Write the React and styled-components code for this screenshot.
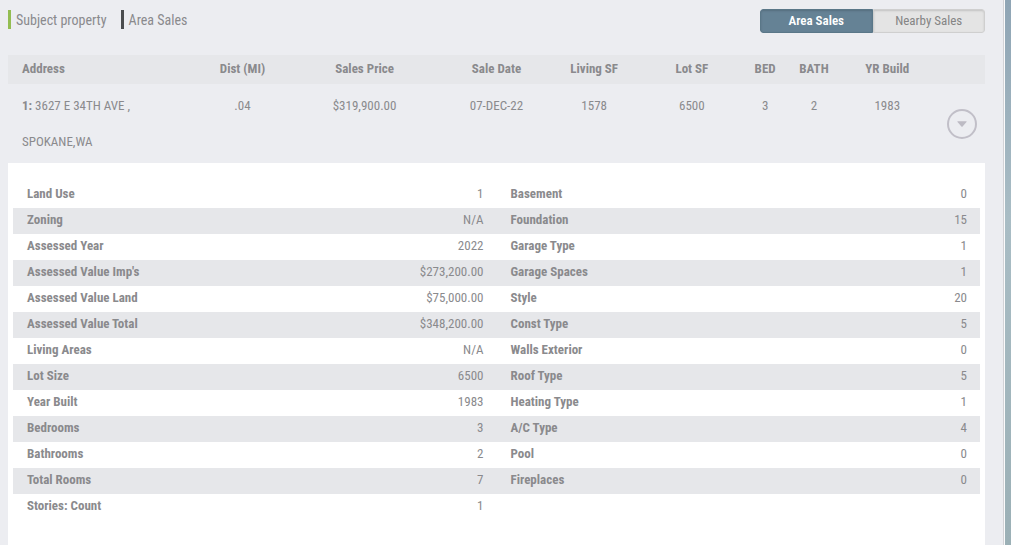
import React, { useState } from "react";
import styled, { createGlobalStyle } from "styled-components";

const GlobalStyle = createGlobalStyle`
  *, *::before, *::after { box-sizing: border-box; }
  body {
    margin: 0;
    color: #8a8a8d;
    background: linear-gradient(180deg, #8fa5b5 0%, #a9bdc5 40%, #9bb0b6 100%);
    font-family: "Roboto Condensed", Roboto, "Liberation Sans", sans-serif;
    font-size: 13px;
    line-height: 26px;
  }
`;

const Panel = styled.main`
  display: flex;
  flex-direction: column;
  min-height: 100vh;
  margin-right: 6px;
  padding: 9px 19px 0 8px;
  background: #ecedf1;
  border-right: 1px solid #fafafb;
  box-shadow: inset -1px 0 #d2d3d7;
`;

const Toolbar = styled.header`
  display: flex;
  align-items: flex-start;
  justify-content: space-between;
  height: 24px;
  margin-bottom: 22px;
`;

const Legend = styled.ul`
  display: flex;
  gap: 14px;
  margin: 0;
  padding: 1px 0 0;
  list-style: none;
`;

const LegendItem = styled.li`
  padding: 1px 0 0 5px;
  border-left: 3px solid ${(p) => p.$color};
  font-size: 14px;
  line-height: 18px;
`;

const Switcher = styled.div`
  display: flex;
  width: 225px;
  border-radius: 3px;
  overflow: hidden;
`;

const SwitchButton = styled.button`
  flex: 1;
  height: 24px;
  padding: 0 0 2px;
  border: 1px solid ${(p) => (p.$active ? "#5a7788" : "#cfcfcf")};
  border-radius: ${(p) => (p.$first ? "3px 0 0 3px" : "0 3px 3px 0")};
  background: ${(p) => (p.$active ? "#658295" : "#e4e4e4")};
  box-shadow: inset 0 1px 2px rgba(0, 0, 0, 0.15);
  color: ${(p) => (p.$active ? "#fff" : "#858585")};
  font-family: inherit;
  font-size: 13px;
  font-weight: ${(p) => (p.$active ? 600 : 400)};
  cursor: pointer;
`;

const SalesTable = styled.table`
  width: 100%;
  table-layout: fixed;
  border-collapse: collapse;
`;

const Column = styled.col`
  width: ${(p) => p.$share}%;
`;

const HeadCell = styled.th`
  height: 29px;
  padding: 0 0 2px ${(p) => (p.$left ? 14 : 0)}px;
  background: #e6e7ea;
  font-weight: 700;
  text-align: ${(p) => (p.$left ? "left" : "center")};
`;

const SaleCell = styled.td`
  height: 79px;
  padding: 4px 0 0 ${(p) => (p.$left ? 14 : 0)}px;
  line-height: 36px;
  text-align: ${(p) => (p.$left ? "left" : "center")};
  vertical-align: top;
`;

const ToggleCell = styled.td`
  padding: 0 8px 0 0;
  vertical-align: middle;
`;

const ToggleButton = styled.button`
  display: flex;
  align-items: center;
  justify-content: center;
  width: 30px;
  height: 30px;
  margin-left: auto;
  padding: 0;
  border: 2px solid #c1bfc8;
  border-radius: 50%;
  background: transparent;
  cursor: pointer;
`;

const Details = styled.section`
  flex: 1;
  padding: 19px 5px;
  background: #fff;
`;

const DetailTable = styled.table`
  width: 100%;
  table-layout: fixed;
  border-collapse: collapse;
`;

const DetailRow = styled.tr`
  height: 26px;
  &:nth-child(even) { background: #e6e7ea; }
`;

const DetailLabel = styled.th`
  padding: 0 0 2px 14px;
  line-height: 24px;
  font-weight: 700;
  text-align: left;
`;

const DetailValue = styled.td`
  padding: 0 13px 2px 0;
  line-height: 24px;
  text-align: right;
`;

const columns = [
  ["Address", 19],
  ["Dist (MI)", 10],
  ["Sales Price", 15],
  ["Sale Date", 12],
  ["Living SF", 8],
  ["Lot SF", 12],
  ["BED", 3],
  ["BATH", 7],
  ["YR Build", 8],
  ["", 6],
];

const sale = [".04", "$319,900.00", "07-DEC-22", "1578", "6500", "3", "2", "1983"];

const details = [
  ["Land Use", "1", "Basement", "0"],
  ["Zoning", "N/A", "Foundation", "15"],
  ["Assessed Year", "2022", "Garage Type", "1"],
  ["Assessed Value Imp's", "$273,200.00", "Garage Spaces", "1"],
  ["Assessed Value Land", "$75,000.00", "Style", "20"],
  ["Assessed Value Total", "$348,200.00", "Const Type", "5"],
  ["Living Areas", "N/A", "Walls Exterior", "0"],
  ["Lot Size", "6500", "Roof Type", "5"],
  ["Year Built", "1983", "Heating Type", "1"],
  ["Bedrooms", "3", "A/C Type", "4"],
  ["Bathrooms", "2", "Pool", "0"],
  ["Total Rooms", "7", "Fireplaces", "0"],
  ["Stories: Count", "1"],
];

export default function App() {
  const [tab, setTab] = useState("Area Sales");
  const [open, setOpen] = useState(true);

  return (
    <>
      <GlobalStyle />
      <Panel>
        <Toolbar>
          <Legend>
            <LegendItem $color="#93bd52">Subject property</LegendItem>
            <LegendItem $color="#4b4d4f">Area Sales</LegendItem>
          </Legend>
          <Switcher>
            {["Area Sales", "Nearby Sales"].map((name, i) => (
              <SwitchButton
                key={name}
                type="button"
                $first={i === 0}
                $active={tab === name}
                aria-pressed={tab === name}
                onClick={() => setTab(name)}
              >
                {name}
              </SwitchButton>
            ))}
          </Switcher>
        </Toolbar>

        <SalesTable>
          <colgroup>
            {columns.map(([name, share]) => (
              <Column key={name} $share={share} />
            ))}
          </colgroup>
          <thead>
            <tr>
              {columns.map(([name], i) => (
                <HeadCell key={name} scope="col" $left={i === 0}>{name}</HeadCell>
              ))}
            </tr>
          </thead>
          <tbody>
            <tr>
              <SaleCell $left>
                <b>1:</b> 3627 E 34TH AVE ,<br />SPOKANE,WA
              </SaleCell>
              {sale.map((value, i) => (
                <SaleCell key={i}>{value}</SaleCell>
              ))}
              <ToggleCell>
                <ToggleButton
                  type="button"
                  aria-label="Toggle details"
                  aria-expanded={open}
                  onClick={() => setOpen(!open)}
                >
                  <svg width="10" height="6" viewBox="0 0 10 6" aria-hidden="true">
                    <path d="M0.8 0.3H9.2Q10 0.4 9.5 1.1L5.6 5.5Q5 6 4.4 5.5L0.5 1.1Q0 0.4 0.8 0.3Z" fill="#bdbbc4" />
                  </svg>
                </ToggleButton>
              </ToggleCell>
            </tr>
          </tbody>
        </SalesTable>

        {open && (
          <Details>
            <DetailTable>
              <tbody>
                {details.map(([label, value, label2, value2]) => (
                  <DetailRow key={label}>
                    <DetailLabel scope="row">{label}</DetailLabel>
                    <DetailValue>{value}</DetailValue>
                    {label2 && <DetailLabel scope="row">{label2}</DetailLabel>}
                    {label2 && <DetailValue>{value2}</DetailValue>}
                  </DetailRow>
                ))}
              </tbody>
            </DetailTable>
          </Details>
        )}
      </Panel>
    </>
  );
}
